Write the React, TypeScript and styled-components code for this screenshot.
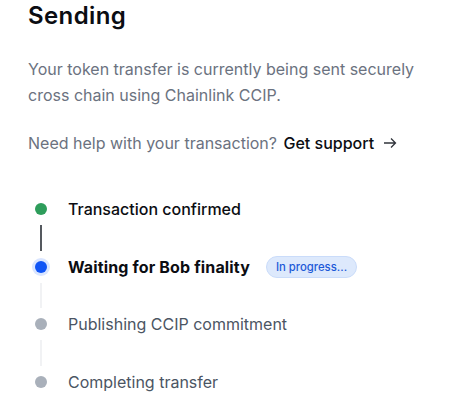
import React from 'react';
import styled, { createGlobalStyle } from 'styled-components';

type StepState = 'done' | 'active' | 'pending';

interface Step {
  label: string;
  state: StepState;
  badge?: string;
}

const steps: Step[] = [
  { label: 'Transaction confirmed', state: 'done' },
  { label: 'Waiting for Bob finality', state: 'active', badge: 'In progress...' },
  { label: 'Publishing CCIP commitment', state: 'pending' },
  { label: 'Completing transfer', state: 'pending' },
];

const ArrowIcon = () => (
  <svg width="14" height="14" viewBox="0 0 14 14" fill="none">
    <path d="M1 7h11.5M8 2.5L12.5 7 8 11.5" stroke="#30343b" strokeWidth="1.3" />
  </svg>
);

export default function App() {
  return (
    <>
      <GlobalStyle />
      <Page>
        <Title>Sending</Title>
        <Description>
          Your token transfer is currently being sent securely cross chain using Chainlink CCIP.
        </Description>
        <Help>
          Need help with your transaction? <SupportLink href="#">Get support</SupportLink>
          <Arrow>
            <ArrowIcon />
          </Arrow>
        </Help>

        <Timeline>
          {steps.map((step, i) => (
            <React.Fragment key={step.label}>
              {i > 0 && (
                <ConnectorRow>
                  <Connector $solid={steps[i - 1].state === 'done'} />
                </ConnectorRow>
              )}
              <StepRow>
                <DotCol>
                  <Dot $state={step.state} />
                </DotCol>
                <StepLabel $state={step.state}>{step.label}</StepLabel>
                {step.badge && <Badge>{step.badge}</Badge>}
              </StepRow>
            </React.Fragment>
          ))}
        </Timeline>
      </Page>
    </>
  );
}

const GlobalStyle = createGlobalStyle`
  html, body {
    margin: 0;
    padding: 0;
    background: #fff;
  }
  body {
    font-family: Inter, "Noto Sans", sans-serif;
    -webkit-font-smoothing: antialiased;
  }
`;

const Page = styled.div`
  padding: 0 28px;
  display: flex;
  flex-direction: column;
`;

const Title = styled.h1`
  margin: 0;
  font-size: 24px;
  line-height: 32px;
  font-weight: 600;
  color: #0b0d12;
  letter-spacing: 0.4px;
`;

const Description = styled.p`
  margin: 24px 0 0;
  font-size: 16px;
  line-height: 26px;
  color: #6b7280;
  max-width: 392px;
`;

const Help = styled.p`
  margin: 22px 0 0;
  font-size: 16px;
  line-height: 26px;
  color: #6b7280;
  display: flex;
  align-items: center;
  white-space: pre;
`;

const SupportLink = styled.a`
  color: #0b0d12;
  font-weight: 500;
  text-decoration: none;
  margin-left: 2px;
`;

const Arrow = styled.span`
  margin-left: 9px;
  display: inline-flex;
  align-items: center;
`;

const Timeline = styled.div`
  margin-top: 41px;
  display: flex;
  flex-direction: column;
`;

const StepRow = styled.div`
  display: flex;
  align-items: center;
  height: 24px;
`;

const DotCol = styled.div`
  width: 26px;
  display: flex;
  justify-content: center;
  margin-right: 14px;
`;

const dotColor: Record<StepState, string> = {
  done: '#2e9d5b',
  active: '#0f54f5',
  pending: '#a9b0ba',
};

const Dot = styled.span<{ $state: StepState }>`
  width: 12px;
  height: 12px;
  border-radius: 50%;
  background: ${(p) => dotColor[p.$state]};
  box-shadow: ${(p) => (p.$state === 'active' ? '0 0 0 3px #d9e5ff' : 'none')};
`;

const StepLabel = styled.span<{ $state: StepState }>`
  font-size: 16px;
  line-height: 24px;
  font-weight: ${(p) => (p.$state === 'active' ? 700 : p.$state === 'done' ? 500 : 400)};
  letter-spacing: ${(p) => (p.$state === 'active' ? '0.15px' : '0')};
  color: ${(p) => (p.$state === 'pending' ? '#4b5563' : '#0b0d12')};
`;

const Badge = styled.span`
  margin-left: 16px;
  height: 22px;
  padding: 0 9px;
  display: inline-flex;
  align-items: center;
  border-radius: 999px;
  background: #dde9fc;
  border: 1px solid #cadcfa;
  box-sizing: border-box;
  color: #1d5ad8;
  font-size: 11.3px;
  font-weight: 500;
`;

const ConnectorRow = styled.div`
  width: 26px;
  display: flex;
  justify-content: center;
  padding: 4px 0;
`;

const Connector = styled.span<{ $solid: boolean }>`
  width: 2px;
  height: 25.5px;
  background: ${(p) => (p.$solid ? '#55595f' : '#f1f2f4')};
`;
